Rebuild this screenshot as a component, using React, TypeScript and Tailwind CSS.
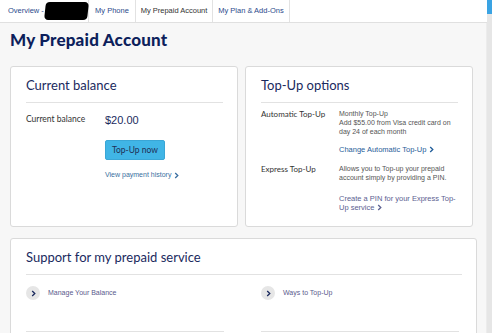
import { ReactNode } from "react";

const geo = { fontFamily: "Lato, 'Open Sans', sans-serif" };
const arial = { fontFamily: "'Liberation Sans', Arial, sans-serif" };

function Chevron({ className = "" }: { className?: string }) {
  return (
    <svg width="5" height="7" viewBox="0 0 5 7" className={className}>
      <path d="M1.2 1 L3.8 3.5 L1.2 6" fill="none" stroke="currentColor" strokeWidth="1.3" />
    </svg>
  );
}

function Tab({ w, active, children }: { w: string; active?: boolean; children: ReactNode }) {
  return (
    <div
      className={`${w} h-full flex items-center justify-center whitespace-nowrap border-r border-[#e2e2e2] text-[7.5px] ${
        active ? "text-[#333]" : "text-[#2c4a8c]"
      }`}
      style={arial}
    >
      {children}
    </div>
  );
}

function Card({ title, className = "", children }: { title: string; className?: string; children: ReactNode }) {
  return (
    <div className={`shrink-0 bg-white border border-[#dadada] rounded-[3px] pl-[15px] pr-[14px] pt-[10px] ${className}`}>
      <h2 className="text-[13px] leading-[16px] text-[#1a2a5e]" style={geo}>
        {title}
      </h2>
      <div className="mt-[9px] h-px bg-[#e2e2e2]" />
      {children}
    </div>
  );
}

function SupportItem({ label }: { label: string }) {
  return (
    <div>
      <div className="flex items-center gap-[8px] mt-[11px]">
        <span className="w-[14px] h-[14px] rounded-full bg-[#e6e6e6] flex items-center justify-center text-[#1a2a5e]">
          <Chevron />
        </span>
        <span className="text-[7px] text-[#5a5a8c]" style={arial}>
          {label}
        </span>
      </div>
      <div className="mt-[31px] h-px bg-[#e2e2e2]" />
    </div>
  );
}

export default function App() {
  return (
    <div className="w-[492px] h-[333px] overflow-hidden flex bg-[#f7f7f7]">
      <div className="w-[487px] flex flex-col">
        {/* tabs */}
        <div className="shrink-0 h-[23px] bg-white border-b border-[#e0e0e0] flex">
          <Tab w="w-[89px]">
            <span className="flex items-center w-full pl-[8px]">
              <span>Overview -</span>
              <span className="shrink-0 ml-[1px] w-[43px] h-[18px] bg-black rounded-[4px] -skew-x-6" />
            </span>
          </Tab>
          <Tab w="w-[47px]">My Phone</Tab>
          <Tab w="w-[77px]" active>
            My Prepaid Account
          </Tab>
          <Tab w="w-[77px]">My Plan &amp; Add-Ons</Tab>
        </div>

        <div className="shrink-0 pl-[10px] border-r border-[#ececec] flex-1">
          <h1 className="mt-[7px] text-[17px] leading-[20px] font-black tracking-[0.2px] text-[#0d1f5c]" style={geo}>
            My Prepaid Account
          </h1>

          <div className="mt-[16px] flex gap-[7px]">
            <Card title="Current balance" className="w-[228px] h-[161px]">
              <div className="mt-[10px] flex items-start">
                <div className="w-[79px] text-[8.5px] leading-[12px] text-[#333]" style={geo}>
                  Current balance
                </div>
                <div>
                  <div className="text-[11px] leading-[14px] text-[#1a2a5e]" style={arial}>
                    $20.00
                  </div>
                  <button
                    className="mt-[13px] w-[60px] h-[20px] bg-[#40b5e6] border border-[#3aa6d6] rounded-[2px] text-[8.5px] text-[#1f2f55]"
                    style={geo}
                  >
                    Top-Up now
                  </button>
                  <a className="mt-[9px] flex items-center gap-[3px] text-[7px] leading-[12px] text-[#3b6fa0]" style={arial}>
                    View payment history <Chevron />
                  </a>
                </div>
              </div>
            </Card>

            <Card title="Top-Up options" className="w-[228px] h-[161px]">
              <div className="mt-[6px] flex items-start">
                <div className="w-[78px] pt-[1px] text-[8px] leading-[9px] text-[#333]" style={geo}>
                  Automatic Top-Up
                </div>
                <div className="text-[7px] leading-[9px] text-[#555]" style={arial}>
                  <div>Monthly Top-Up</div>
                  <div>Add $55.00 from Visa credit card on</div>
                  <div>day 24 of each month</div>
                  <a className="mt-[9px] flex items-center gap-[3px] text-[7.5px] text-[#1f5c99]">
                    Change Automatic Top-Up <Chevron />
                  </a>
                </div>
              </div>
              <div className="mt-[10px] flex items-start">
                <div className="w-[78px] pt-[1px] text-[8px] leading-[9px] text-[#333]" style={geo}>
                  Express Top-Up
                </div>
                <div className="text-[7px] leading-[9px] text-[#555]" style={arial}>
                  <div>Allows you to Top-up your prepaid</div>
                  <div>account simply by providing a PIN.</div>
                  <div className="mt-[12px] text-[#5c6191] text-[7.5px]">
                    <div>Create a PIN for your Express Top-</div>
                    <div className="flex items-center gap-[3px]">
                      Up service <Chevron />
                    </div>
                  </div>
                </div>
              </div>
            </Card>
          </div>

          <Card title="Support for my prepaid service" className="mt-[11px] w-[467px] h-[120px]">
            <div className="grid grid-cols-[198px_198px] gap-x-[37px]">
              <SupportItem label="Manage Your Balance" />
              <SupportItem label="Ways to Top-Up" />
            </div>
          </Card>
        </div>
      </div>

      {/* scrollbar */}
      <div className="w-[5px] bg-[#e6e6e6]">
        <div className="h-[14px] bg-[#3aa3e3]" />
      </div>
    </div>
  );
}
